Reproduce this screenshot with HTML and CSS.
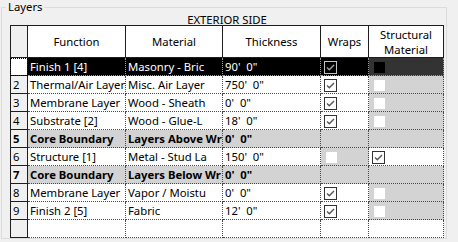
FILE: index.html
```html
<!DOCTYPE html>
<html lang="en">
<head>
    <meta charset="UTF-8">
    <title>Layers</title>
    <link rel="stylesheet" href="styles.css">
</head>
<body>
    <fieldset class="layers">
        <legend>Layers</legend>
        <div class="side-label">EXTERIOR SIDE</div>
        <table class="layer-grid">
            <thead>
                <tr>
                    <th class="num col-num"></th>
                    <th class="col-func">Function</th>
                    <th class="col-mat">Material</th>
                    <th class="col-thick">Thickness</th>
                    <th class="col-wraps">Wraps</th>
                    <th class="col-struct">Structural<br>Material</th>
                </tr>
            </thead>
            <tbody>
                <tr class="selected">
                    <td class="num current">1</td>
                    <td>Finish 1 [4]</td>
                    <td>Masonry - Bric</td>
                    <td>90'&nbsp; 0"</td>
                    <td><span class="chk checked"></span></td>
                    <td class="locked"><span class="chk"></span></td>
                </tr>
                <tr>
                    <td class="num">2</td>
                    <td>Thermal/Air Layer</td>
                    <td>Misc. Air Layer</td>
                    <td>750'&nbsp; 0"</td>
                    <td><span class="chk checked"></span></td>
                    <td class="locked"><span class="chk blank"></span></td>
                </tr>
                <tr>
                    <td class="num">3</td>
                    <td>Membrane Layer</td>
                    <td>Wood - Sheath</td>
                    <td>0'&nbsp; 0"</td>
                    <td><span class="chk checked"></span></td>
                    <td class="locked"><span class="chk blank"></span></td>
                </tr>
                <tr>
                    <td class="num">4</td>
                    <td>Substrate [2]</td>
                    <td>Wood - Glue-L</td>
                    <td>18'&nbsp; 0"</td>
                    <td><span class="chk checked"></span></td>
                    <td class="locked"><span class="chk blank"></span></td>
                </tr>
                <tr class="core">
                    <td class="num">5</td>
                    <td>Core Boundary</td>
                    <td>Layers Above Wr</td>
                    <td>0'&nbsp; 0"</td>
                    <td></td>
                    <td></td>
                </tr>
                <tr>
                    <td class="num">6</td>
                    <td>Structure [1]</td>
                    <td>Metal - Stud La</td>
                    <td>150'&nbsp; 0"</td>
                    <td class="locked"><span class="chk blank"></span></td>
                    <td><span class="chk checked"></span></td>
                </tr>
                <tr class="core">
                    <td class="num">7</td>
                    <td>Core Boundary</td>
                    <td>Layers Below Wr</td>
                    <td>0'&nbsp; 0"</td>
                    <td></td>
                    <td></td>
                </tr>
                <tr>
                    <td class="num">8</td>
                    <td>Membrane Layer</td>
                    <td>Vapor / Moistu</td>
                    <td>0'&nbsp; 0"</td>
                    <td><span class="chk checked"></span></td>
                    <td class="locked"><span class="chk blank"></span></td>
                </tr>
                <tr>
                    <td class="num">9</td>
                    <td>Finish 2 [5]</td>
                    <td>Fabric</td>
                    <td>12'&nbsp; 0"</td>
                    <td><span class="chk checked"></span></td>
                    <td class="locked"><span class="chk blank"></span></td>
                </tr>
                <tr>
                    <td class="num"></td>
                    <td></td>
                    <td></td>
                    <td></td>
                    <td></td>
                    <td></td>
                </tr>
            </tbody>
        </table>
    </fieldset>
</body>
</html>
```

FILE: styles.css
```css
:root {
    --color-window: #f0f0f0;
    --color-line: #1e1e1e;
    --color-dots: #4a4a4a;
    --color-locked: #d3d3d3;
    --color-frame: #dcdcdc;
}

* {
    box-sizing: border-box;
}

body {
    margin: 0;
    background: var(--color-window);
    font-family: 'Noto Sans', 'Open Sans', sans-serif;
    font-size: 11.3px;
    color: #000;
    overflow: hidden;
}

.layers {
    width: 446px;
    margin: 0 0 0 1px;
    padding: 0 2px 0 8px;
    border: 1px solid var(--color-frame);
    min-width: 0;
}

.layers legend {
    padding: 0 2px;
    margin-left: -4px;
    line-height: 14px;
}

.side-label {
    text-align: center;
    line-height: 11px;
}

.layer-grid {
    width: 434px;
    table-layout: fixed;
    border-collapse: separate;
    border-spacing: 0;
    background: #fff;
}

.layer-grid th {
    height: 33px;
    padding: 0;
    font-weight: normal;
    line-height: 15px;
    text-align: center;
    border-top: 1px solid var(--color-line);
    border-right: 1px solid var(--color-line);
    border-bottom: 1px solid var(--color-line);
    background: #fff;
}

.col-num { width: 18px; }
.col-func { width: 98px; }
.col-mat { width: 97px; }
.col-thick { width: 98px; }
.col-wraps { width: 48px; }
.col-struct { width: 75px; }

.layer-grid td {
    height: 18px;
    padding: 0 0 0 2px;
    line-height: 17px;
    white-space: nowrap;
    overflow: hidden;
    text-overflow: clip;
    border-right: 1px dotted var(--color-dots);
    border-bottom: 1px dotted var(--color-dots);
}

.layer-grid .num {
    background: var(--color-window);
    border-left: 1px solid var(--color-line);
    border-right: 1px solid var(--color-line);
    border-bottom: 1px solid var(--color-line);
    padding-left: 2px;
}

.layer-grid td.num.current {
    background: #fff;
    outline: 1px dotted #000;
    outline-offset: -1px;
}

.selected td {
    background: #000;
    color: #fff;
    border-color: #9a9a9a;
}

.selected td.locked {
    background: #333;
}

.core td {
    background: var(--color-locked);
    font-weight: bold;
}

td.locked {
    background: var(--color-locked);
}

/* checkbox cells */
.chk {
    display: block;
    width: 13px;
    height: 13px;
    margin: 2px 0 0 1px;
    border: 1px solid #333;
    background: #fff;
}

.chk.checked {
    background: #fff url("data:image/svg+xml,%3Csvg xmlns='http://www.w3.org/2000/svg' width='11' height='11' viewBox='0 0 11 11'%3E%3Cpath d='M2 5.5 L4.3 7.8 L9 3' fill='none' stroke='%23555' stroke-width='1.4'/%3E%3C/svg%3E") no-repeat center;
}

.chk.blank {
    border-color: transparent;
    background-clip: content-box;
    margin-left: 2px;
}

.selected .chk.checked {
    border-color: #c4c4c4;
    background-color: #000;
    background-image: url("data:image/svg+xml,%3Csvg xmlns='http://www.w3.org/2000/svg' width='11' height='11' viewBox='0 0 11 11'%3E%3Cpath d='M2 5.5 L4.3 7.8 L9 3' fill='none' stroke='%23a0a0a0' stroke-width='1.4'/%3E%3C/svg%3E");
}

.selected .locked .chk {
    border-color: transparent;
    background: #000;
    background-clip: content-box;
    margin-left: 2px;
}
```
